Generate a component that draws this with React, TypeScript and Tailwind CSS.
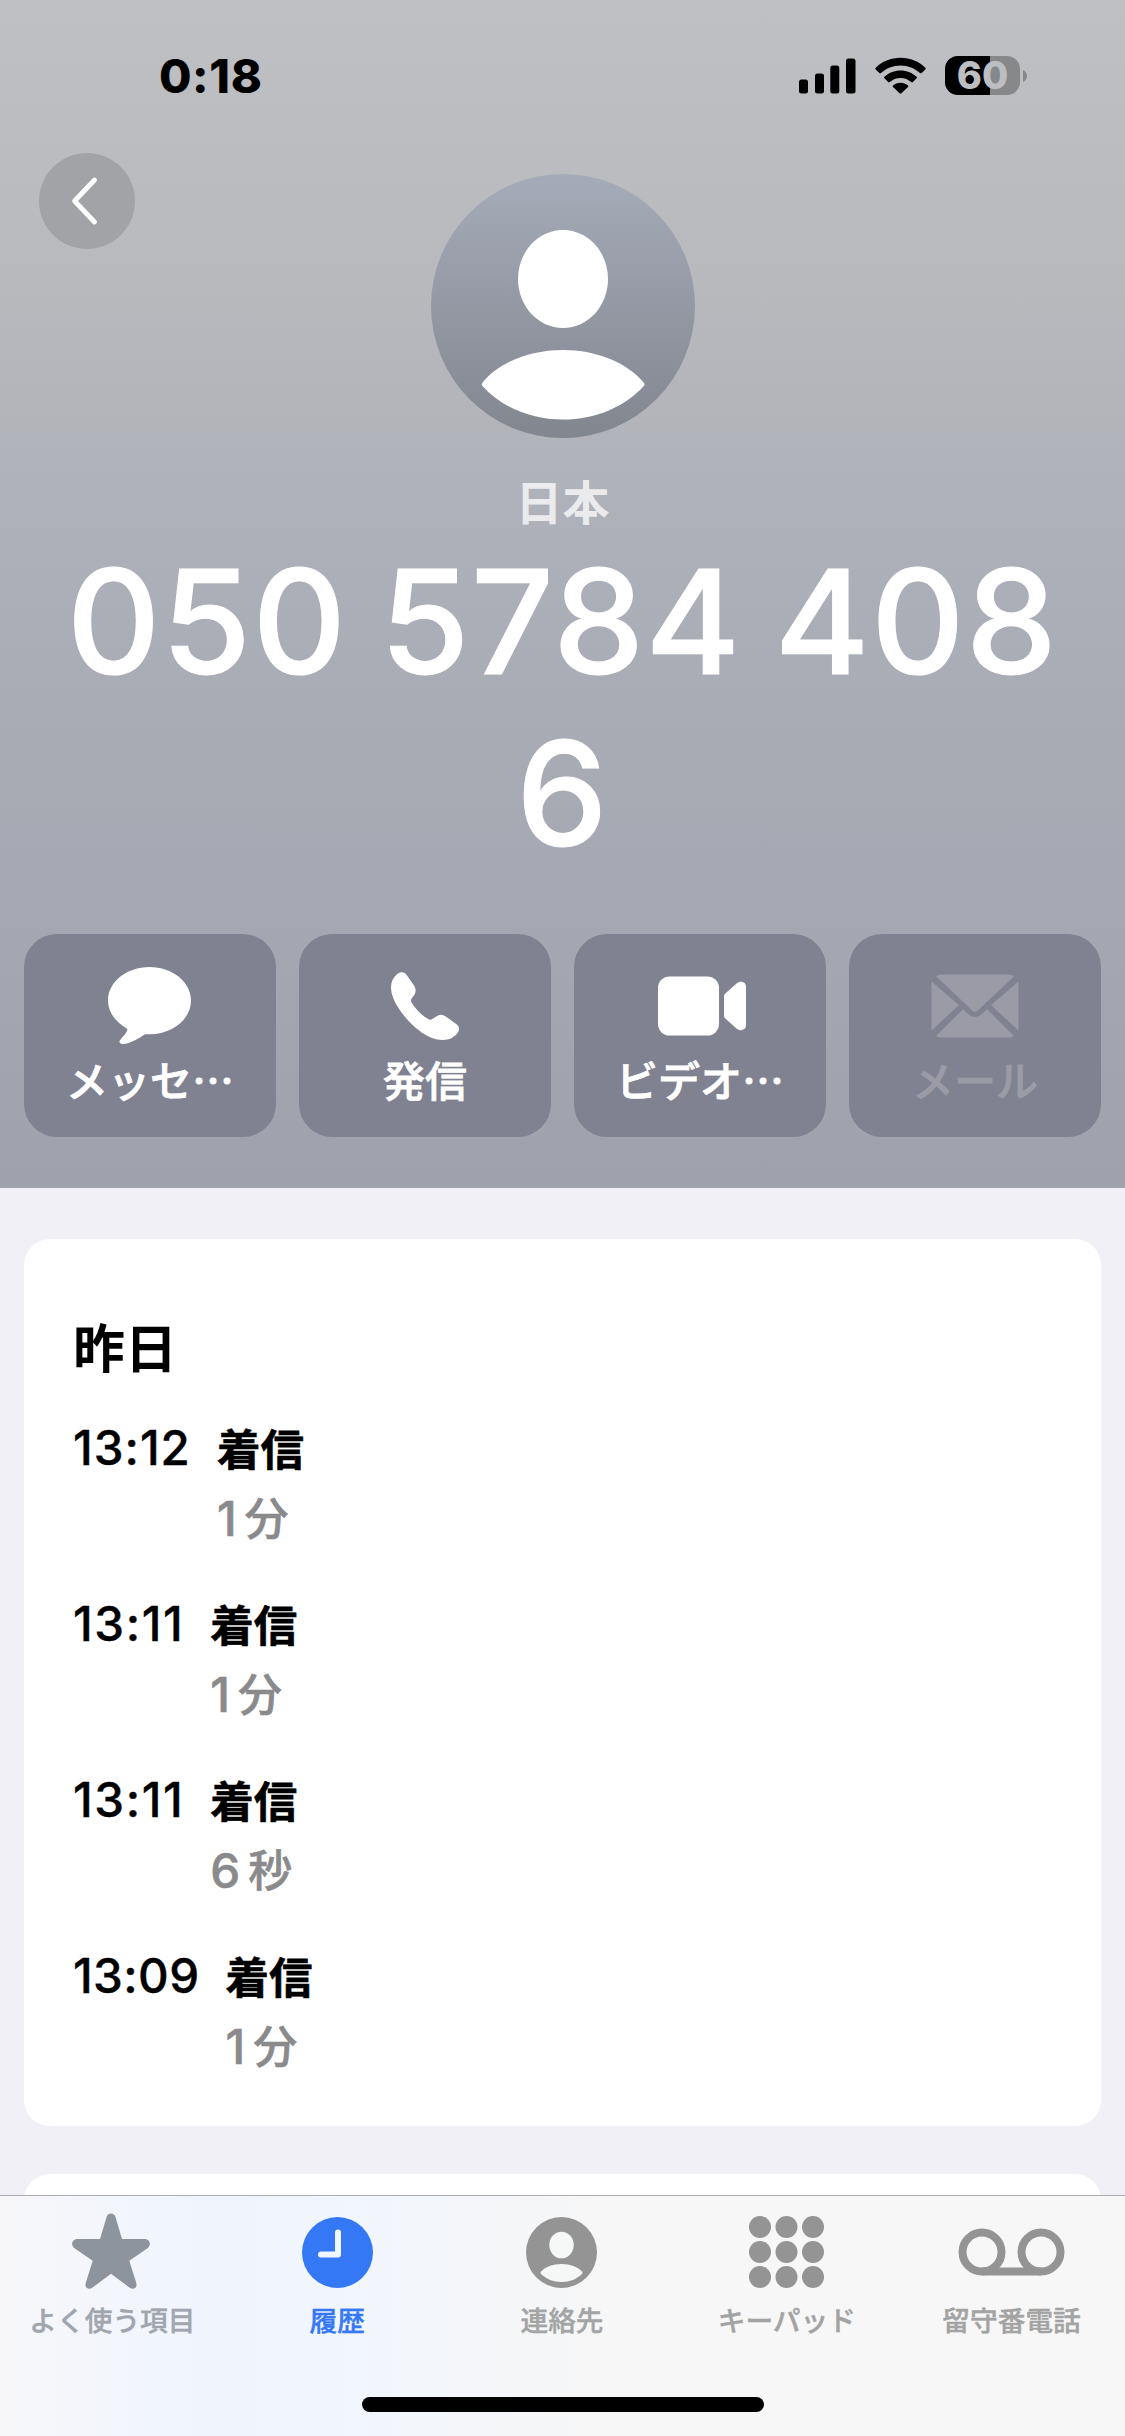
import type { ReactNode } from 'react';

function SignalIcon() {
  return (
    <svg width="58" height="36" viewBox="0 0 58 36" fill="#000">
      <rect x="0" y="21.5" width="9" height="14" rx="2.5" />
      <rect x="16" y="15.5" width="9" height="20" rx="2.5" />
      <rect x="31.3" y="7.5" width="9" height="28" rx="2.5" />
      <rect x="47" y="0.5" width="9.5" height="35" rx="2.5" />
    </svg>
  );
}

function WifiIcon() {
  return (
    <svg width="51" height="37" viewBox="0 0 51 37" fill="#000">
      <path d="M25.5 0.8C35.3 0.8 44 4.6 50.3 10.8C50.8 11.3 50.8 11.9 50.3 12.4L46.6 16.1C46.1 16.6 45.5 16.6 45 16.1C39.9 11.2 33.1 8.4 25.5 8.4C17.9 8.4 11.1 11.2 6 16.1C5.5 16.6 4.9 16.6 4.4 16.1L0.7 12.4C0.2 11.9 0.2 11.3 0.7 10.8C7 4.6 15.7 0.8 25.5 0.8Z" />
      <path d="M25.5 13.4C31.8 13.4 37.4 15.8 41.6 19.7C42.1 20.2 42.1 20.8 41.6 21.3L37.9 25C37.4 25.5 36.8 25.5 36.2 25C33.4 22.5 29.7 20.9 25.5 20.9C21.3 20.9 17.6 22.5 14.8 25C14.2 25.5 13.6 25.5 13.1 25L9.4 21.3C8.9 20.8 8.9 20.2 9.4 19.7C13.6 15.8 19.2 13.4 25.5 13.4Z" />
      <path d="M25.5 25.8C28.4 25.8 31 26.8 33 28.5C33.5 28.9 33.5 29.4 33 29.9L26.4 36.3C25.8 36.9 25.2 36.9 24.6 36.3L18 29.9C17.5 29.4 17.5 28.9 18 28.5C20 26.8 22.6 25.8 25.5 25.8Z" />
    </svg>
  );
}

function Battery({ level }: { level: number }) {
  return (
    <div className="flex items-center gap-[3px]">
      <div className="relative w-[75px] h-[39px] rounded-[13px] bg-[#87888a]">
        <div className="h-full rounded-l-[13px] bg-black" style={{ width: `${level}%` }} />
        <span className="absolute inset-0 text-center text-[38px] leading-[39px] font-extrabold text-[#bdbec2]">
          {level}
        </span>
      </div>
      <svg width="4" height="12" viewBox="0 0 4 12">
        <path d="M0 0C2.4 1 4 3.2 4 6C4 8.8 2.4 11 0 12Z" fill="#87888a" />
      </svg>
    </div>
  );
}

function Avatar() {
  return (
    <svg width="264" height="264" viewBox="0 0 264 264">
      <defs>
        <linearGradient id="avatar" x1="0" y1="0" x2="0" y2="1">
          <stop offset="0" stopColor="#a6abb9" />
          <stop offset="1" stopColor="#82868f" />
        </linearGradient>
      </defs>
      <circle cx="132" cy="132" r="132" fill="url(#avatar)" />
      <path
        d="M132 56C157 56 177 78 177 105C177 132 157 154 132 154C107 154 87 132 87 105C87 78 107 56 132 56Z"
        fill="#fff"
      />
      <path
        d="M51.3 209C67 189 98 176 132 176C166 176 197 189 213 209C213.6 209.8 213.6 211 213 211.7C194 233 164 245.5 132 245.5C100 245.5 70 233 51.3 211.7C50.6 211 50.6 209.8 51.3 209Z"
        fill="#fff"
      />
    </svg>
  );
}

const MessageIcon = () => (
  <svg width="84" height="80" viewBox="0 0 84 80" fill="#fff">
    <path d="M41.5 1C64.5 1 83 16 83 34.5C83 53 64.5 68.3 41.5 68.3C40 68.3 38.2 68.3 37 68.2C30 73 22 77.5 15 78C11.5 78.2 10.5 76 12.3 73.7C15 70.5 18.3 67.5 19.3 64C19.5 63.2 19.2 62.8 18.7 62.5C7.5 56 0 46 0 34.5C0 16 18.5 1 41.5 1Z" />
  </svg>
);

const PhoneIcon = () => (
  <svg width="68" height="68" viewBox="0 0 68 68" fill="#fff">
    <path d="M51.5 68C37 68 22 55 12.5 43C4.5 33 0 23.5 0 15.5C0 10 2 5.5 6 2.2C9.5 -0.6 13.3 -0.4 15.5 2.7L23 13.5C25 16.5 25.2 20 23.3 23L20.6 26.6C19.8 27.8 19.8 28.8 20.3 30C24 36.5 31 43.5 37.6 47.3C38.8 47.9 39.8 47.9 40.9 47.2L46.5 43.8C49.3 42.2 51.8 42.4 54.4 44.3L65.5 52.3C68.3 54.4 68.8 57.3 67 60.3C63.2 65.8 58.3 68 51.5 68Z" />
  </svg>
);

const VideoIcon = () => (
  <svg className="ml-[4px]" width="88" height="60" viewBox="0 0 88 60" fill="#fff">
    <rect x="0" y="0.5" width="61" height="59" rx="11.5" />
    <path d="M66 20.5C66 19.2 66.4 18.2 67.3 17.4L78.5 7.6C82.5 4.2 88 6 88 11V49C88 54 82.5 55.8 78.5 52.4L67.3 42.6C66.4 41.8 66 40.8 66 39.5Z" />
  </svg>
);

const MailIcon = () => (
  <svg width="88" height="64" viewBox="0 0 88 64" fill="#9a9ba7">
    <path d="M5 2.2C6.5 1 8.5 0.5 11 0.5H77C79.5 0.5 81.5 1 83 2.2L46.8 36.5C44.7 38.3 43.3 38.3 41.2 36.5Z" />
    <path d="M0.5 7.5L28 31L0.5 56.5Z" />
    <path d="M87.5 7.5L60 31L87.5 56.5Z" />
    <path d="M5 62L32 35.2L37.5 40.2C42 43.8 46 43.8 50.5 40.2L56 35.2L83 62C81.5 63.2 79.5 63.5 77 63.5H11C8.5 63.5 6.5 63.2 5 62Z" />
  </svg>
);

const StarIcon = () => (
  <svg className="mr-[2px] mb-[3px]" width="78" height="76" viewBox="0 0 78 76" fill="#8e949e">
    <path d="M34.8 3.3C36.3 -0.5 41.7 -0.5 43.2 3.3L50 26H72.5C78 26 79.8 32 75.5 35.2L57.3 47.8L64.3 70C65.5 74.8 61.5 77.3 57.7 74.7L39 60.8L20.3 74.7C16.5 77.3 12.5 74.8 13.7 70L20.7 47.8L2.5 35.2C-1.8 32 0 26 5.5 26H28Z" />
  </svg>
);

const ClockIcon = () => (
  <svg width="71" height="71" viewBox="0 0 71 71">
    <circle cx="35.5" cy="35.5" r="35.5" fill="#3478f6" />
    <path d="M36 15.5V37.5H19" fill="none" stroke="#f1f6fe" strokeWidth="6" strokeLinecap="round" strokeLinejoin="round" />
  </svg>
);

const ContactIcon = () => (
  <svg width="71" height="71" viewBox="0 0 71 71">
    <circle cx="35.5" cy="35.5" r="35.5" fill="#949494" />
    <ellipse cx="35.5" cy="28" rx="12.2" ry="13.3" fill="#f6f7f7" />
    <path
      d="M15 54.5C19 50 27 47 35.5 47C44 47 52 50 56 54.5C56.6 55.3 56.6 56.3 56 57C51 62 43.5 65 35.5 65C27.5 65 20 62 15 57C14.4 56.3 14.4 55.3 15 54.5Z"
      fill="#f6f7f7"
    />
  </svg>
);

const KeypadIcon = () => (
  <svg width="75" height="72" viewBox="0 0 75 72" fill="#949494">
    {[11, 36, 61].map(y =>
      [11, 37.5, 64].map(x => <circle key={`${x}-${y}`} cx={x} cy={y} r="11" />)
    )}
  </svg>
);

const VoicemailIcon = () => (
  <svg width="107" height="48" viewBox="0 0 107 48" fill="none" stroke="#949494" strokeWidth="8">
    <circle cx="24" cy="24" r="19.5" />
    <circle cx="83" cy="24" r="19.5" />
    <path d="M24 43.5H83" />
  </svg>
);

const actions = [
  { label: 'メッセ…', icon: <MessageIcon />, disabled: false },
  { label: '発信', icon: <PhoneIcon />, disabled: false },
  { label: 'ビデオ…', icon: <VideoIcon />, disabled: false },
  { label: 'メール', icon: <MailIcon />, disabled: true },
];

const calls = [
  { time: '13:12', kind: '着信', count: '1', unit: '分' },
  { time: '13:11', kind: '着信', count: '1', unit: '分' },
  { time: '13:11', kind: '着信', count: '6', unit: '秒' },
  { time: '13:09', kind: '着信', count: '1', unit: '分' },
];

const tabs = [
  { label: 'よく使う項目', icon: <StarIcon />, color: 'text-[#a0a5ae]' },
  { label: '履歴', icon: <ClockIcon />, color: 'text-[#3478f6]' },
  { label: '連絡先', icon: <ContactIcon />, color: 'text-[#a2a4a5]' },
  { label: 'キーパッド', icon: <KeypadIcon />, color: 'text-[#a3a3a3]' },
  { label: '留守番電話', icon: <VoicemailIcon />, color: 'text-[#a3a3a3]' },
];

// The "1" is narrow in Inter, so times with more of them get looser spacing
const timeSpacing = (time: string) => {
  const ones = time.split('1').length - 1;
  return `${(ones - 1) * 0.6 + 0.4}px`;
};

function ActionButton({ label, icon, disabled }: { label: string; icon: ReactNode; disabled: boolean }) {
  return (
    <button disabled={disabled} className="h-[203px] rounded-[33px] bg-[#808291] flex flex-col items-center">
      <div className="h-[106px] mt-[19px] flex items-center justify-center">{icon}</div>
      <span
        className={`-mt-1 font-['Noto_Sans_CJK_JP',sans-serif] text-[42px] leading-[48px] font-medium whitespace-nowrap [-webkit-text-stroke:0.8px_currentColor] ${disabled ? 'text-[#9a9ba7]' : 'text-white'}`}
      >
        {label}
      </span>
    </button>
  );
}

export default function App() {
  return (
    <div className="w-[1125px] h-[2436px] overflow-hidden flex flex-col bg-[#f1f0f6] font-['Inter','Noto_Sans_CJK_JP',sans-serif]">
      {/* Contact header */}
      <header className="h-[1188px] shrink-0 flex flex-col bg-[linear-gradient(180deg,#bfc0c4_0%,#b8b9bd_24%,#adb0b8_46%,#a9abb4_63%,#a5a7b3_76%,#9fa1ac_100%)]">
        <div className="h-[153px] shrink-0 pl-[159px] pr-[98px] pb-[2px] flex items-center justify-between">
          <span className="text-[47px] leading-none font-extrabold tracking-[0.6px] text-black">0:18</span>
          <div className="flex items-center">
            <SignalIcon />
            <div className="ml-[18px] mr-[19px]"><WifiIcon /></div>
            <Battery level={60} />
          </div>
        </div>

        <div className="grid grid-cols-3 items-start">
          <button className="ml-[39px] size-[96px] rounded-full bg-[#a2a3a7] flex items-center justify-center">
            <svg className="mr-[4px]" width="28" height="50" viewBox="0 0 28 50" fill="none">
              <path d="M23.5 4L3.6 25L23.5 46" stroke="#fff" strokeWidth="4.8" strokeLinecap="round" strokeLinejoin="round" />
            </svg>
          </button>
          <div className="mt-[21px] flex justify-center"><Avatar /></div>
        </div>

        <p className="mt-[35px] text-center text-[47px] leading-[60px] font-bold text-[#ebebed]">日本</p>
        <h1 className="mt-[3px] px-12 text-center text-[145px] leading-[172px] font-medium tracking-[1.2px] [word-spacing:-7px] break-all text-white [-webkit-text-stroke:1px_currentColor]">
          050 5784 4086
        </h1>

        <div className="mt-[54px] px-6 grid grid-cols-4 gap-[23px]">
          {actions.map(a => <ActionButton key={a.label} {...a} />)}
        </div>
      </header>

      {/* Call history */}
      <main className="flex-1 min-h-0 overflow-hidden px-6 pt-[51px] flex flex-col gap-12">
        <section className="h-[887px] shrink-0 rounded-[26px] bg-white px-[49px] pt-[77px]">
          <h2 className="text-[52px] leading-[68px] font-bold text-black">昨日</h2>
          <ul className="mt-[29px]">
            {calls.map((c, i) => (
              <li key={i} className="h-[176px] flex gap-[26px] text-[47.5px] leading-[70px] font-medium text-black">
                <span className="[-webkit-text-stroke:0.4px_currentColor]" style={{ letterSpacing: timeSpacing(c.time) }}>{c.time}</span>
                <div>
                  <p className="pt-[4px] leading-[67px] text-[43.5px] font-bold [-webkit-text-stroke:0.6px_currentColor]">{c.kind}</p>
                  <p className="flex gap-2 text-[#8a8a8c] [-webkit-text-stroke:0.6px_currentColor]">
                    {c.count}
                    <span className="text-[44px]">{c.unit}</span>
                  </p>
                </div>
              </li>
            ))}
          </ul>
        </section>
        <section className="h-[200px] shrink-0 rounded-[26px] bg-white" />
      </main>

      {/* Tab bar */}
      <nav className="h-[241px] shrink-0 border-t border-[#acacaf] flex flex-col items-center bg-[linear-gradient(90deg,#f7f7fa_0%,#f0f5fd_18%,#f1f6fe_28%,#f5f6f8_46%,#f7f7f7_55%)]">
        <div className="w-full h-[201px] pr-px grid grid-cols-5">
          {tabs.map(t => (
            <div key={t.label} className="flex flex-col items-center">
              <div className="h-[80px] mt-[16px] flex items-center">{t.icon}</div>
              <span className={`mt-[11px] text-[27.7px] leading-[36px] font-medium whitespace-nowrap [-webkit-text-stroke:0.4px_currentColor] ${t.color}`}>
                {t.label}
              </span>
            </div>
          ))}
        </div>
        <div className="w-[402px] h-[15px] rounded-full bg-black" />
      </nav>
    </div>
  );
}
